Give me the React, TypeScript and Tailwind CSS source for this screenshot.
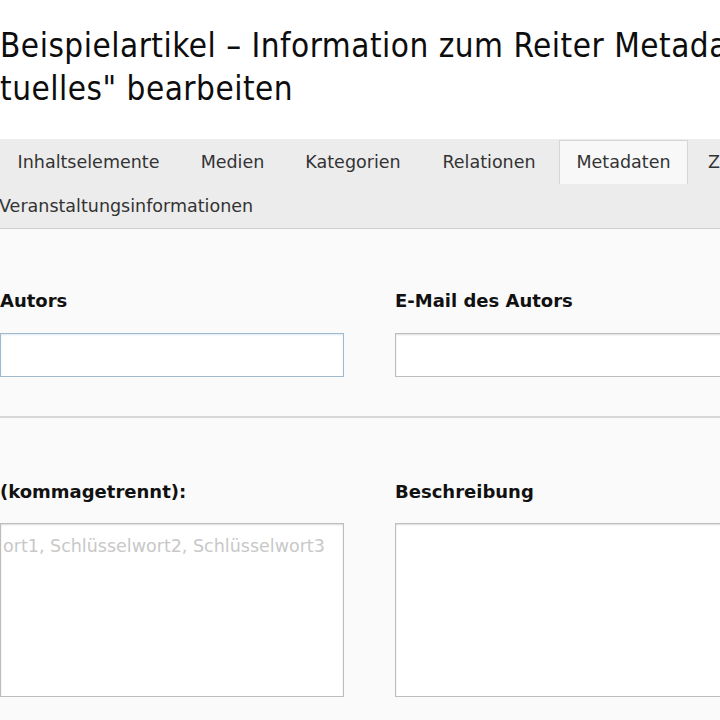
import React from 'react'

const body = { fontFamily: '"DejaVu Sans", Verdana, sans-serif' }
const title = { fontFamily: '"DejaVu Sans Condensed", "Liberation Sans Narrow", "DejaVu Sans", sans-serif' }

const tabs = [
  { label: 'Inhaltselemente', cls: 'w-[185px] -ml-[4px]' },
  { label: 'Medien', cls: 'w-[103px]' },
  { label: 'Kategorien', cls: 'w-[138px]' },
  { label: 'Relationen', cls: 'w-[134px]' },
]

function Field({ label, focus }: { label: string; focus?: boolean }) {
  return (
    <div className="flex w-[344px] shrink-0 flex-col gap-[20px]">
      <label className="text-[18px] leading-[25px] font-bold whitespace-nowrap text-[#111]">{label}</label>
      <div
        className={
          focus
            ? 'h-[44px] w-full border border-[#9ebad0] bg-white shadow-[inset_0_1px_2px_rgba(80,120,160,0.18)]'
            : 'h-[44px] w-full border border-[#bdbdbd] bg-white shadow-[inset_0_1px_2px_rgba(0,0,0,0.14)]'
        }
      />
    </div>
  )
}

export default function App() {
  return (
    <div className="h-[720px] w-[720px] overflow-hidden bg-[#fafafa]" style={body}>
      <header className="bg-white pt-[24px] pb-[29px]">
        <h1
          className="text-[33px] leading-[43px] font-normal tracking-[0.5px] whitespace-nowrap text-[#0d0d0d]"
          style={title}
        >
          <div>Beispielartikel – Information zum Reiter Metadaten" auf Seite</div>
          <div>tuelles" bearbeiten</div>
        </h1>
      </header>

      <nav className="border-b border-[#cfcfcf] bg-[#ececec] text-[17.5px] text-[#333]">
        <div className="flex h-[45px] items-end whitespace-nowrap">
          {tabs.map((t) => (
            <div key={t.label} className={`flex h-[44px] shrink-0 items-center justify-center ${t.cls}`}>
              {t.label}
            </div>
          ))}
          <div className="ml-[3px] flex h-[44px] w-[129px] shrink-0 items-center justify-center border border-b-0 border-[#d6d6d6] bg-[#f8f8f8]">
            Metadaten
          </div>
          <div className="flex h-[44px] shrink-0 items-center pl-[20px]">Zugriff</div>
        </div>
        <div className="flex h-[44px] items-center whitespace-nowrap">
          <div className="-ml-[21px] px-[20px]">Veranstaltungsinformationen</div>
        </div>
      </nav>

      <main className="pt-[59px]">
        <div className="flex gap-[51px]">
          <Field label="Autors" focus />
          <Field label="E-Mail des Autors" />
        </div>

        <div className="mt-[39px] h-[2px] bg-[#d6d6d6]" />

        <div className="mt-[61px] flex gap-[51px]">
          <div className="flex w-[344px] shrink-0 flex-col gap-[19px]">
            <label className="text-[18px] leading-[25px] font-bold whitespace-nowrap text-[#111]">(kommagetrennt):</label>
            <div className="h-[174px] w-full overflow-hidden border border-[#bdbdbd] bg-white pt-[10px] shadow-[inset_0_1px_2px_rgba(0,0,0,0.14)]">
              <div className="ml-[2px] text-[17.5px] leading-[24px] whitespace-nowrap text-[#c8c8c8]">
                ort1, Schlüsselwort2, Schlüsselwort3
              </div>
            </div>
          </div>
          <div className="flex w-[344px] shrink-0 flex-col gap-[19px]">
            <label className="text-[18px] leading-[25px] font-bold whitespace-nowrap text-[#111]">Beschreibung</label>
            <div className="h-[174px] w-full border border-[#bdbdbd] bg-white shadow-[inset_0_1px_2px_rgba(0,0,0,0.14)]" />
          </div>
        </div>
      </main>
    </div>
  )
}
